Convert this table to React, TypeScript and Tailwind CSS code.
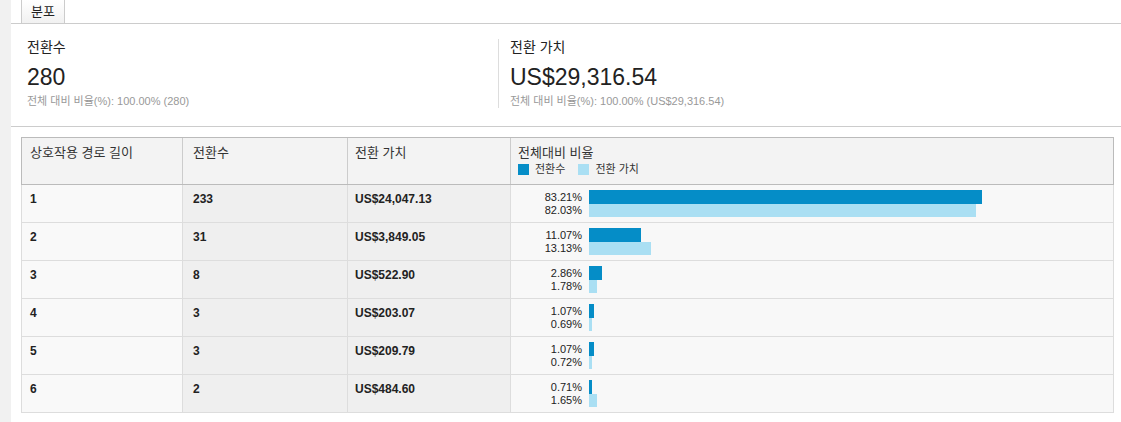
import React from 'react'

const FONT = { fontFamily: '"Liberation Sans", Arial, "Noto Sans CJK KR", sans-serif' }

const rows = [
  { len: '1', conv: '233', value: 'US$24,047.13', a: 83.21, b: 82.03 },
  { len: '2', conv: '31', value: 'US$3,849.05', a: 11.07, b: 13.13 },
  { len: '3', conv: '8', value: 'US$522.90', a: 2.86, b: 1.78 },
  { len: '4', conv: '3', value: 'US$203.07', a: 1.07, b: 0.69 },
  { len: '5', conv: '3', value: 'US$209.79', a: 1.07, b: 0.72 },
  { len: '6', conv: '2', value: 'US$484.60', a: 0.71, b: 1.65 },
]

// 100% 막대 길이
const FULL = 472

function Metric({ label, value, sub, divider }: { label: string; value: string; sub: string; divider?: boolean }) {
  return (
    <div className={divider ? 'border-l border-[#dddddd] pl-[11px]' : 'pl-[16px]'}>
      <div className="text-[14px] leading-[16px] text-[#222]">{label}</div>
      <div className="mt-[7px] text-[23px] leading-[30px] text-[#222]">{value}</div>
      <div className="mt-[2px] text-[11px] leading-[14px] text-[#999]">{sub}</div>
    </div>
  )
}

export default function App() {
  return (
    <div className="flex w-[1121px] h-[422px] bg-white overflow-hidden" style={FONT}>
      <div className="w-[11px] shrink-0 bg-[#f1f1f1]" />

      <div className="flex-1 flex flex-col">
        {/* 탭 */}
        <div className="h-[24px] border-b border-[#cccccc] pl-[10px] flex">
          <div className="w-[44px] h-full border-x border-[#cccccc] bg-gradient-to-b from-white to-[#f1f1f1] flex items-center justify-center text-[13px] text-[#222]">
            분포
          </div>
        </div>

        {/* 요약 지표 */}
        <div className="h-[103px] border-b border-[#cccccc] pt-[15px] grid grid-cols-[487px_1fr]">
          <Metric label="전환수" value="280" sub="전체 대비 비율(%): 100.00% (280)" />
          <div className="h-[71px]">
            <Metric
              divider
              label="전환 가치"
              value="US$29,316.54"
              sub="전체 대비 비율(%): 100.00% (US$29,316.54)"
            />
          </div>
        </div>

        {/* 표 */}
        <div className="ml-[10px] mt-[10px] w-[1093px] text-[12px] text-[#222]">
          <div className="grid grid-cols-[161px_165px_163px_602px] h-[48px] border border-[#bbbbbb] bg-[#f3f3f3] text-[#333] text-[13px]">
            <div className="border-r border-[#cccccc] pl-[8px] pt-[7px] leading-[16px]">상호작용 경로 길이</div>
            <div className="border-r border-[#cccccc] pl-[10px] pt-[7px] leading-[16px]">전환수</div>
            <div className="border-r border-[#cccccc] pl-[7px] pt-[7px] leading-[16px]">전환 가치</div>
            <div className="pl-[7px] pt-[7px]">
              <div className="leading-[16px]">전체대비 비율</div>
              <div className="flex items-center mt-[1px] text-[11px] leading-[14px]">
                <span className="w-[11px] h-[11px] bg-[#058dc7] mr-[6px]" />
                <span className="mr-[13px]">전환수</span>
                <span className="w-[11px] h-[11px] bg-[#aadff3] mr-[6px]" />
                <span>전환 가치</span>
              </div>
            </div>
          </div>

          {rows.map(r => (
            <div
              key={r.len}
              className="grid grid-cols-[161px_165px_163px_602px] h-[38px] border-x border-b border-[#dddddd] font-bold"
            >
              <div className="bg-[#f9f9f9] border-r border-[#dddddd] pl-[8px] pt-[7px] leading-[14px]">{r.len}</div>
              <div className="bg-[#efefef] border-r border-[#dddddd] pl-[10px] pt-[7px] leading-[14px]">{r.conv}</div>
              <div className="bg-[#efefef] border-r border-[#dddddd] pl-[7px] pt-[7px] leading-[14px]">{r.value}</div>
              <div className="bg-[#f8f8f8] pt-[5px] flex font-normal text-[11px]">
                <div className="w-[71px] text-right">
                  <div className="h-[14px] leading-[14px]">{r.a.toFixed(2)}%</div>
                  <div className="h-[13px] leading-[13px]">{r.b.toFixed(2)}%</div>
                </div>
                <div className="ml-[7px]">
                  <div className="h-[14px] bg-[#058dc7]" style={{ width: Math.max(1, Math.round((r.a / 100) * FULL)) }} />
                  <div className="h-[13px] bg-[#aadff3]" style={{ width: Math.max(1, Math.round((r.b / 100) * FULL)) }} />
                </div>
              </div>
            </div>
          ))}
        </div>
      </div>
    </div>
  )
}
